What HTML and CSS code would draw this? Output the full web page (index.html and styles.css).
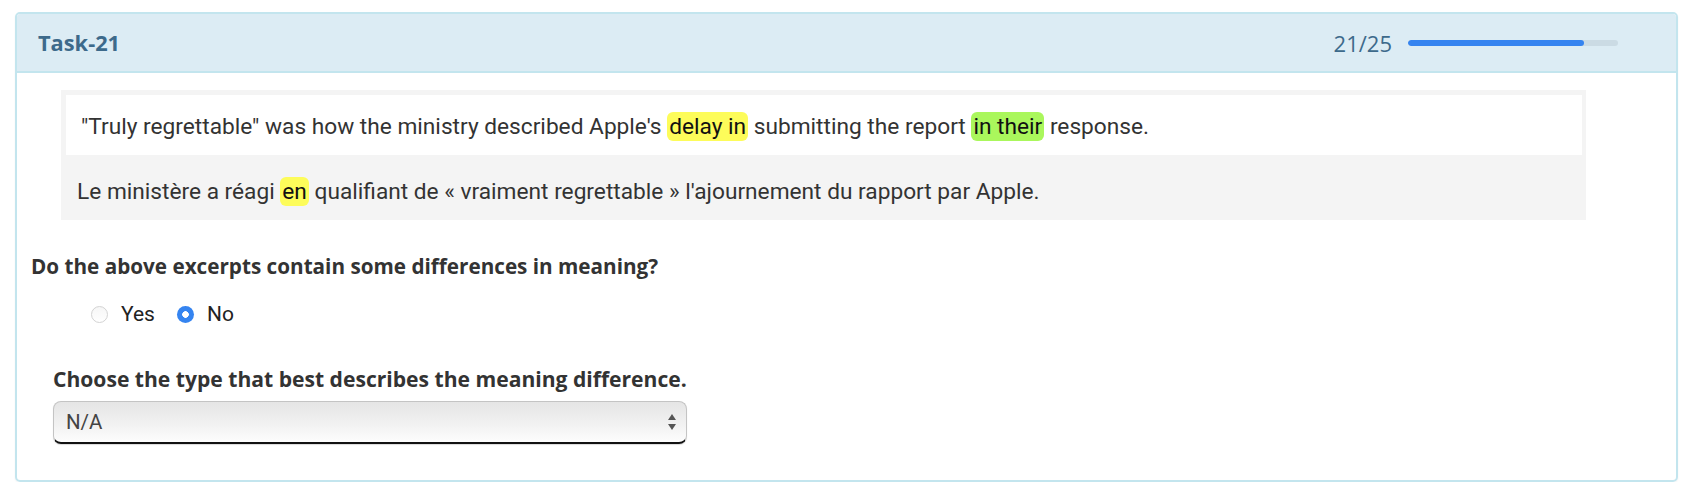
FILE: index.html
```html
<!DOCTYPE html>
<html lang="en">
<head>
<meta charset="utf-8">
<title>Task-21</title>
<link rel="stylesheet" href="styles.css">
</head>
<body>
<div class="panel">
  <div class="panel-header">
    <span class="task-title">Task-21</span>
    <div class="progress">
      <span class="progress-count">21/25</span>
      <div class="progress-track"><div class="progress-fill" style="width:84%"></div></div>
    </div>
  </div>
  <div class="panel-body">
    <div class="excerpts">
      <div class="excerpt excerpt-source">"Truly regrettable" was how the ministry described Apple's <mark class="hl hl-yellow">delay in</mark> submitting the report <mark class="hl hl-green">in their</mark> response.</div>
      <div class="excerpt excerpt-target">Le ministère a réagi <mark class="hl hl-yellow">en</mark> qualifiant de « vraiment regrettable » l'ajournement du rapport par Apple.</div>
    </div>
    <div class="question">Do the above excerpts contain some differences in meaning?</div>
    <div class="radios">
      <label class="radio-option"><input type="radio" name="diff" class="radio"><span>Yes</span></label>
      <label class="radio-option"><input type="radio" name="diff" class="radio" checked><span>No</span></label>
    </div>
    <div class="subquestion">
      <div class="question question-sub">Choose the type that best describes the meaning difference.</div>
      <div class="select-wrap">
        <select class="select"><option>N/A</option></select>
        <svg class="select-arrows" width="10" height="18" viewBox="0 0 10 18"><path d="M1 7 L5 1 L9 7 Z" fill="#555"/><path d="M1 11 L9 11 L5 17 Z" fill="#555"/></svg>
      </div>
    </div>
  </div>
</div>
</body>
</html>
```

FILE: styles.css
```css
* { box-sizing: border-box; }
html, body { margin: 0; padding: 0; background: #ffffff; }
body { font-family: Roboto, "Liberation Sans", sans-serif; color: #333; }

.panel {
  margin: 12px 10px 0 15px;
  border: 2px solid #c3e5ee;
  border-radius: 5px;
  box-shadow: 0 1px 2px rgba(0,0,0,0.05);
  overflow: hidden;
}

.panel-header {
  height: 59px;
  background: #dcecf4;
  border-bottom: 2px solid #c3e5ee;
  display: flex;
  align-items: center;
  justify-content: space-between;
  padding: 0 58px 0 21px;
}
.task-title {
  font-family: "Open Sans", sans-serif;
  font-weight: 700;
  font-size: 21.8px;
  color: #3d6a8b;
}
.progress { display: flex; align-items: center; gap: 16px; }
.progress-count {
  font-family: "Open Sans", sans-serif;
  font-size: 22px;
  color: #3d6a8b;
}
.progress-track {
  width: 210px;
  height: 6px;
  border-radius: 3px;
  background: #cbdbe4;
  overflow: hidden;
}
.progress-fill { height: 100%; background: #3584f0; border-radius: 3px; }

.panel-body { padding: 17px 90px 36px 14px; }

.excerpts {
  margin-left: 30px;
  background: #f4f4f4;
  padding: 5px 4px 0 5px;
}
.excerpt { font-size: 22.7px; color: #333; white-space: nowrap; }
.excerpt-source {
  background: #ffffff;
  height: 60px;
  line-height: 56px;
  padding: 4px 15px 0;
}
.excerpt-target {
  height: 65px;
  line-height: 30px;
  padding: 22px 11px 13px;
}
.hl {
  color: #111;
  padding: 1px 2px;
  border-radius: 6px;
}
.hl-yellow { background: #fdfc5a; }
.hl-green { background: #aaf75c; }

.question {
  font-family: "Open Sans", sans-serif;
  font-weight: 700;
  font-size: 20.7px;
  line-height: 28px;
  color: #333;
}
.question-sub { font-size: 21.1px; }
.excerpts + .question { margin-top: 32px; }

.radios {
  display: flex;
  gap: 22px;
  margin: 19px 0 0 60px;
  height: 30px;
  align-items: center;
}
.radio-option {
  display: inline-flex;
  align-items: center;
  gap: 13px;
  font-size: 21px;
  color: #222;
}
.radio {
  -webkit-appearance: none;
  appearance: none;
  margin: 0;
  width: 17px;
  height: 17px;
  border-radius: 50%;
  border: 1px solid #d3d3d3;
  background: linear-gradient(#f6f6f6, #ffffff);
}
.radio:checked {
  border: none;
  background: radial-gradient(circle, #ffffff 0 3px, #3584f0 3.6px);
}

.subquestion { margin: 36px 0 0 22px; }
.select-wrap { position: relative; width: 634px; margin-top: 8px; }
.select {
  -webkit-appearance: none;
  appearance: none;
  display: block;
  width: 634px;
  height: 43px;
  margin: 0;
  padding: 0 12px;
  font-family: Roboto, sans-serif;
  font-size: 20.5px;
  color: #444;
  border: 1px solid #c4c4c4;
  border-bottom: 2px solid #111;
  border-radius: 8px;
  background: linear-gradient(#e5e5e5, #f0f0f0 50%, #fdfdfd);
  box-shadow: 0 1px 1px rgba(0,0,0,0.15);
}
.select-arrows {
  position: absolute;
  right: 10px;
  top: 12px;
  pointer-events: none;
}
```
